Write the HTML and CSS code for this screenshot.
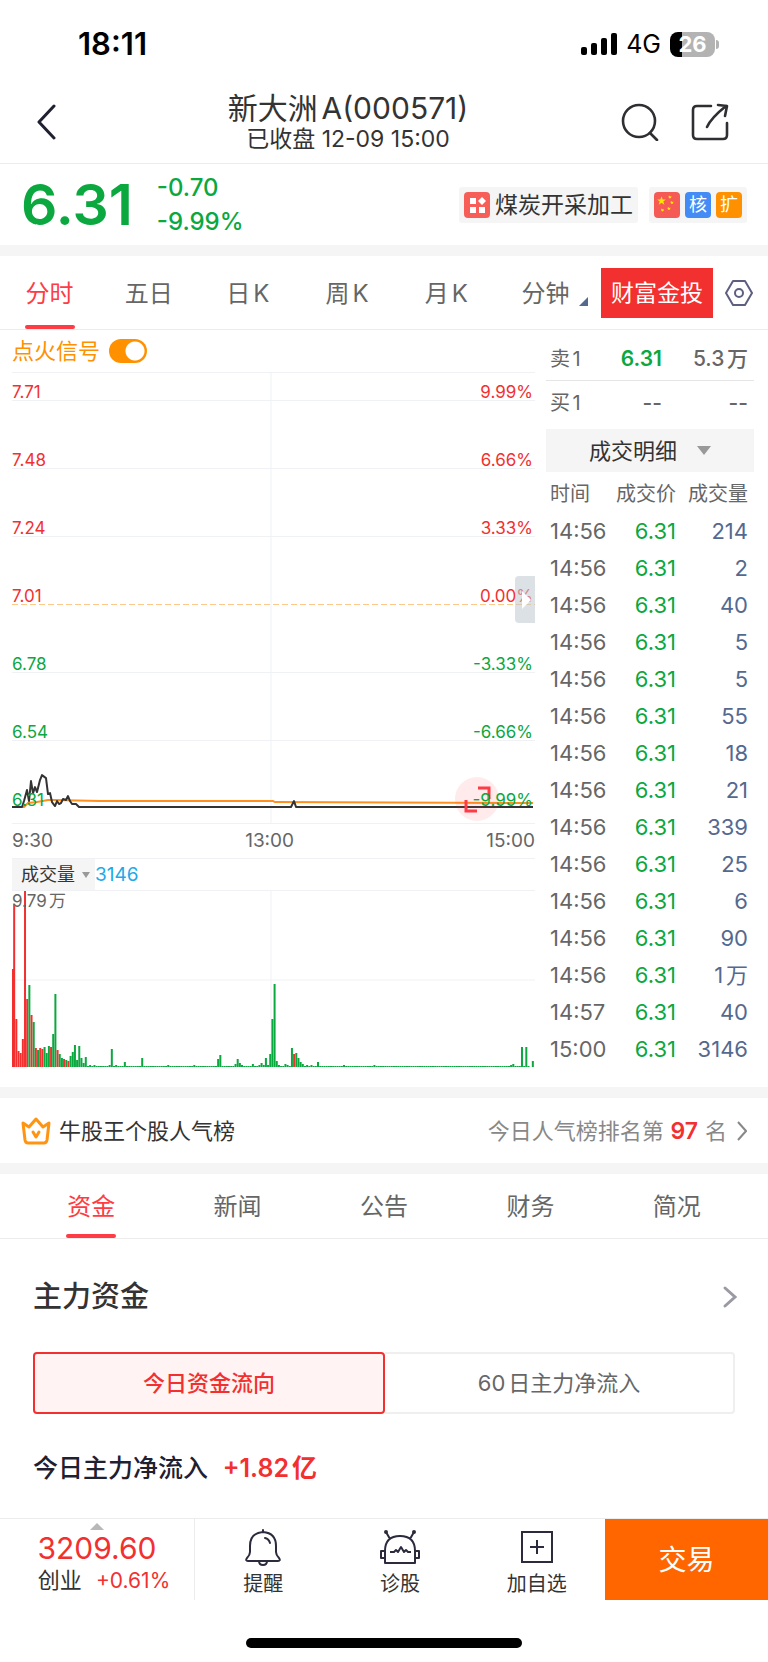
FILE: index.html
```html
<!DOCTYPE html>
<html lang="zh-CN">
<head>
  <meta charset="UTF-8">
  <meta name="viewport" content="width=device-width, initial-scale=1">
  <title>新大洲A(000571)</title>
  <link rel="stylesheet" href="styles.css">
</head>
<body>

  <div class="status-bar">
    <span class="clock">18:11</span>
    <div class="status-icons">
      <svg width="36" height="22" viewBox="0 0 36 22">
        <rect x="0" y="14" width="6" height="8" rx="2"/>
        <rect x="10" y="10" width="6" height="12" rx="2"/>
        <rect x="20" y="5" width="6" height="17" rx="2"/>
        <rect x="30" y="0" width="6" height="22" rx="2"/>
      </svg>
      <span class="network">4G</span>
      <span class="battery">26</span>
    </div>
  </div>

  <header class="header">
    <button class="icon-button back" aria-label="返回">
      <svg width="20" height="36" viewBox="0 0 20 36" fill="none" stroke="#1f2030" stroke-width="3" stroke-linecap="round" stroke-linejoin="round"><path d="M18 2L3 18l15 16"/></svg>
    </button>
    <div class="title">
      <h1>新大洲A(000571)</h1>
      <p>已收盘 12-09 15:00</p>
    </div>
    <div class="header-actions">
      <button class="icon-button" aria-label="搜索">
        <svg width="38" height="38" viewBox="0 0 38 38" fill="none" stroke="#2f2f33" stroke-width="2.6" stroke-linecap="round"><circle cx="18" cy="18" r="16"/><path d="M29 30l7 7"/></svg>
      </button>
      <button class="icon-button" aria-label="分享">
        <svg width="38" height="38" viewBox="0 0 38 38" fill="none" stroke="#2f2f33" stroke-width="2.6" stroke-linecap="round" stroke-linejoin="round"><path d="M20 3H6Q2 3 2 7v25q0 4 4 4h26q4 0 4-4V20"/><path d="M16 24Q20 15 35 3M27 2l9 1-2 10"/></svg>
      </button>
    </div>
  </header>

  <section class="quote">
    <strong class="price">6.31</strong>
    <div class="change">
      <span>-0.70</span>
      <span>-9.99%</span>
    </div>
    <a class="tag" href="#">
      <svg class="tag-icon" viewBox="0 0 26 26"><rect width="26" height="26" rx="4" fill="#f65e57"/><g fill="#fff"><rect x="6" y="6" width="6" height="6"/><rect x="6" y="15" width="6" height="6"/><rect x="15" y="15" width="6" height="6"/><path d="M18 5l4 4-4 4-4-4z"/></g></svg>
      煤炭开采加工
    </a>
    <a class="tag tag-marks" href="#" aria-label="概念">
      <svg class="tag-icon" viewBox="0 0 26 26"><rect width="26" height="26" rx="4" fill="#f65a55"/><g fill="#ffe600"><path d="M7.500 4.500l1.200 3h3.100l-2.500 2 1 3.200-2.800-1.900-2.800 1.900 1-3.200-2.500-2h3.100z"/><path d="M15 3.500l1.500 1 1-.5-.5 2-1.500.5-1-1.500zM17 9l1.500 1 1-.5-.5 2-1.500.5-1-1.500zM14 15l1.500 1 1-.5-.5 2-1.500.5-1-1.500zM7.500 16.500l1.500 1 1-.5-.5 2-1.500.5-1-1.500z"/></g></svg>
      <span class="mark blue">核</span>
      <span class="mark orange">扩</span>
    </a>
  </section>

  <nav class="periods">
    <div class="period-tabs">
      <button class="period active">分时</button>
      <button class="period">五日</button>
      <button class="period">日K</button>
      <button class="period">周K</button>
      <button class="period">月K</button>
      <button class="period more">分钟</button>
    </div>
    <a class="promo" href="#">财富金投</a>
    <button class="icon-button" aria-label="设置">
      <svg width="28" height="28" viewBox="0 0 28 28" fill="none" stroke="#5c5f80" stroke-width="2" stroke-linejoin="round"><path d="M8 2h12l7 12-7 12H8L1 14z"/><circle cx="14" cy="14" r="4"/></svg>
    </button>
  </nav>

  <main class="market">
    <div class="charts">
      <label class="signal">
        点火信号
        <input type="checkbox" class="switch" checked>
      </label>

      <div class="plot">
        <svg class="lines" viewBox="0 0 523 451" preserveAspectRatio="none" fill="none">
          <path d="M259 0V451" stroke="#f0f1f4"/>
          <path d="M0 232H523" stroke="#ffc88a" stroke-width="1" stroke-dasharray="6 3"/>
          <polyline stroke="#ff8f1f" stroke-width="2" points="0,435 12,435 16,431 25,430 36,428 43,428 88,429 261,429 263,430 521,431"/>
          <polyline stroke="#333" stroke-width="2" stroke-linejoin="round" points="0,435 10,435 12,429 15,418 17,429 19,409 21,421 23,415 25,420 28,408 30,403 34,406 36,422 38,421 40,430 43,434 45,429 47,432 49,431 51,427 54,428 56,424 58,429 60,432 64,432 67,435 279,435 282,429 284,435 521,435"/>
        </svg>
        <button class="expand" aria-label="全屏">
          <svg width="44" height="44" viewBox="0 0 44 44" fill="none" stroke="#ff3b45" stroke-width="3"><path d="M23 11h11v11M11 23v11h11"/></svg>
        </button>
        <div class="level up"><span>7.71</span><span>9.99%</span></div>
        <div class="level up"><span>7.48</span><span>6.66%</span></div>
        <div class="level up"><span>7.24</span><span>3.33%</span></div>
        <div class="level up middle"><span>7.01</span><span>0.00%</span></div>
        <div class="level down"><span>6.78</span><span>-3.33%</span></div>
        <div class="level down"><span>6.54</span><span>-6.66%</span></div>
        <div class="level down last"><span>6.31</span><span>-9.99%</span></div>
        <button class="handle" aria-label="收起"></button>
      </div>

      <div class="times"><span>9:30</span><span>13:00</span><span>15:00</span></div>

      <div class="volume-head">
        <div class="picker small">
          <select aria-label="指标"><option>成交量</option></select>
        </div>
        <span>3146</span>
      </div>
      <div class="volume-plot">
        <svg id="volume" class="lines" viewBox="0 0 523 176" preserveAspectRatio="none">
          <path d="M259 0V176M0 89H523" stroke="#f0f1f4"/>
        </svg>
        <span class="volume-max">9.79万</span>
      </div>
    </div>

    <aside class="orders">
      <table class="book">
        <tr><th scope="row">卖1</th><td class="green">6.31</td><td>5.3万</td></tr>
        <tr><th scope="row">买1</th><td>--</td><td>--</td></tr>
      </table>
      <div class="picker large">
        <select aria-label="明细类型"><option>成交明细</option></select>
      </div>
      <table class="trades">
        <thead>
          <tr><th>时间</th><th>成交价</th><th>成交量</th></tr>
        </thead>
        <tbody>
          <tr><td>14:56</td><td>6.31</td><td>214</td></tr>
          <tr><td>14:56</td><td>6.31</td><td>2</td></tr>
          <tr><td>14:56</td><td>6.31</td><td>40</td></tr>
          <tr><td>14:56</td><td>6.31</td><td>5</td></tr>
          <tr><td>14:56</td><td>6.31</td><td>5</td></tr>
          <tr><td>14:56</td><td>6.31</td><td>55</td></tr>
          <tr><td>14:56</td><td>6.31</td><td>18</td></tr>
          <tr><td>14:56</td><td>6.31</td><td>21</td></tr>
          <tr><td>14:56</td><td>6.31</td><td>339</td></tr>
          <tr><td>14:56</td><td>6.31</td><td>25</td></tr>
          <tr><td>14:56</td><td>6.31</td><td>6</td></tr>
          <tr><td>14:56</td><td>6.31</td><td>90</td></tr>
          <tr><td>14:56</td><td>6.31</td><td>1万</td></tr>
          <tr><td>14:57</td><td>6.31</td><td>40</td></tr>
          <tr><td>15:00</td><td>6.31</td><td>3146</td></tr>
        </tbody>
      </table>
    </aside>
  </main>

  <a class="ranking" href="#">
    <svg width="30" height="28" viewBox="0 0 30 28" fill="none" stroke="#ff9412" stroke-width="3" stroke-linejoin="round" stroke-linecap="round"><path d="M2 6l6 4 7-8 7 8 6-4-2 17q-.5 3-3 3H7q-2.500 0-3-3z"/><path d="M12 15l3 5 3-5"/></svg>
    <span class="ranking-name">牛股王个股人气榜</span>
    <span class="ranking-place">今日人气榜排名第<b>97</b>名</span>
    <svg width="10" height="20" viewBox="0 0 10 20" fill="none" stroke="#888" stroke-width="2"><path d="M1 1l8 9-8 9"/></svg>
  </a>

  <nav class="sections">
    <button class="section active">资金</button>
    <button class="section">新闻</button>
    <button class="section">公告</button>
    <button class="section">财务</button>
    <button class="section">简况</button>
  </nav>

  <section class="funds">
    <a class="funds-head" href="#">
      <h2>主力资金</h2>
      <svg width="12" height="22" viewBox="0 0 12 22" fill="none" stroke="#9a9aa5" stroke-width="3" stroke-linecap="round" overflow="visible"><path d="M2 2l10 9-10 9"/></svg>
    </a>
    <div class="switcher">
      <button class="active">今日资金流向</button>
      <button>60日主力净流入</button>
    </div>
    <p class="inflow">今日主力净流入 <b>+1.82亿</b></p>
  </section>

  <footer class="bottom-bar">
    <a class="index" href="#">
      <span class="index-value">3209.60</span>
      <span class="index-row">创业 <span>+0.61%</span></span>
    </a>
    <button class="action">
      <svg width="42" height="38" viewBox="0 0 42 38" fill="none" stroke="#2b2b3d" stroke-width="2" stroke-linejoin="round" stroke-linecap="round"><path d="M21 2v2M21 4Q8 5 8 18v6q0 3-3 6-2 3 1 3h30q3 0 1-3-3-3-3-6v-6Q34 5 21 4zM17 33q0 4 4 4t4-4M23 10q4 1 5 5"/></svg>
      提醒
    </button>
    <button class="action">
      <svg width="42" height="38" viewBox="0 0 42 38" fill="none" stroke="#2b2b3d" stroke-width="2" stroke-linejoin="round"><path d="M6 35V23Q6 8 21 8t15 15v12zM6 23H2v7h4M36 23h4v7h-4M11 11L7 4M31 11l4-7"/><circle cx="7" cy="4" r="1" fill="#2b2b3d"/><circle cx="35" cy="4" r="1" fill="#2b2b3d"/><path d="M11 24h4l2-2 2 2 3-5 3 5 2-2 2 2h3"/></svg>
      诊股
    </button>
    <button class="action">
      <svg width="42" height="38" viewBox="0 0 42 38" fill="none" stroke="#2b2b3d" stroke-width="2"><rect x="6" y="4" width="30" height="30"/><path d="M21 12v14M14 19h14"/></svg>
      加自选
    </button>
    <button class="trade">交易</button>
  </footer>
  <div class="home-indicator"></div>

  <script>
    const MINUTES = 241;
    const BASE = 176;
    // minute: height of the bar
    const volumes = {
      0: 98, 1: 163, 2: 48, 3: 16, 4: 14, 5: 28, 6: 176, 7: 68, 8: 82, 9: 52, 10: 45,
      11: 19, 12: 17, 13: 19, 14: 18, 15: 20, 16: 14, 17: 21, 18: 20, 19: 33, 20: 73,
      21: 17, 22: 13, 23: 9, 24: 8, 25: 7, 26: 6, 27: 11, 28: 15, 29: 22, 30: 7, 31: 21,
      32: 9, 33: 4, 34: 10, 36: 2, 38: 2, 45: 2, 46: 18, 48: 2, 52: 5, 60: 9, 72: 2, 84: 2,
      95: 8, 96: 12, 103: 3, 104: 8, 105: 4, 106: 2, 111: 3, 114: 2, 115: 4, 116: 2,
      117: 9, 118: 2, 119: 13, 120: 48, 121: 83, 122: 6, 123: 2, 126: 3, 127: 2, 129: 19,
      130: 13, 131: 14, 132: 9, 133: 5, 134: 3, 136: 2, 138: 2, 141: 5, 153: 2, 167: 2,
      230: 2, 231: 3, 235: 20, 237: 20, 240: 6
    };
    const rising = [0, 1, 2, 3, 4, 5, 6, 7, 9, 11, 13, 14, 18, 21, 24, 26, 130];

    const svg = document.getElementById('volume');
    for (let i = 0; i < MINUTES; i++) {
      if (i === 239) continue;
      const height = volumes[i] || 1;
      const bar = document.createElementNS('http://www.w3.org/2000/svg', 'rect');
      bar.setAttribute('x', Math.max(0, i * 523 / MINUTES - 1));
      bar.setAttribute('y', BASE - height);
      bar.setAttribute('width', 2);
      bar.setAttribute('height', height);
      bar.setAttribute('fill', rising.includes(i) ? '#f23030' : '#0aa83f');
      svg.appendChild(bar);
    }
  </script>
</body>
</html>
```
FILE: styles.css
```css
* {
  box-sizing: border-box;
}

body {
  margin: 0;
  background: #fff;
  color: #333;
  font-family: Inter, "Noto Sans CJK SC", sans-serif;
  font-size: 22px;
  line-height: 32px;
  text-autospace: normal;
}

h1, h2, p {
  margin: 0;
}

a {
  color: inherit;
  text-decoration: none;
}

button, select {
  padding: 0;
  border: none;
  background: none;
  color: inherit;
  font: inherit;
  cursor: pointer;
}

svg {
  display: block;
}

table {
  width: 100%;
  border-collapse: collapse;
}

th, td {
  padding: 0;
  font-weight: 400;
}

.icon-button {
  display: flex;
}

.green {
  color: #0aa83f;
}

/* status bar */
.status-bar {
  display: flex;
  justify-content: space-between;
  align-items: center;
  height: 88px;
  padding: 0 53px 0 78px;
  color: #000;
}

.clock {
  font-size: 31px;
  font-weight: 600;
}

.status-icons {
  display: flex;
  align-items: center;
  gap: 9px;
}

.network {
  font-size: 25px;
}

.battery {
  position: relative;
  width: 45px;
  height: 25px;
  border-radius: 8px;
  background: linear-gradient(to right, #000 12px, #b3b3b3 12px);
  color: #fff;
  font-size: 22px;
  font-weight: 700;
  line-height: 25px;
  text-align: center;
}

.battery::after {
  content: "";
  position: absolute;
  top: 8px;
  right: -4px;
  width: 3px;
  height: 9px;
  border-radius: 0 3px 3px 0;
  background: #b3b3b3;
}

/* header */
.header {
  display: flex;
  align-items: center;
  height: 76px;
  padding-bottom: 8px;
  border-bottom: 1px solid #ececec;
}

.back {
  width: 87px;
  padding-left: 36px;
}

.title {
  flex: 1;
  text-align: center;
}

.title h1 {
  font-size: 30px;
  font-weight: 400;
  line-height: 34px;
}

.title p {
  font-size: 23px;
  line-height: 28px;
}

.header-actions {
  display: flex;
  gap: 32px;
  width: 159px;
  padding-left: 12px;
}

/* quote */
.quote {
  display: flex;
  align-items: center;
  height: 92px;
  padding: 0 21px;
  border-bottom: 11px solid #f5f5f5;
}

.price {
  color: #0aa83f;
  font-size: 57px;
  font-weight: 600;
  line-height: 64px;
}

.change {
  display: flex;
  flex: 1;
  flex-direction: column;
  padding-left: 24px;
  color: #0aa83f;
  font-size: 24px;
  font-weight: 500;
  line-height: 34px;
}

.tag {
  display: flex;
  align-items: center;
  gap: 5px;
  height: 36px;
  padding: 0 5px;
  border-radius: 3px;
  background: #f5f5f5;
  font-size: 23px;
}

.tag-marks {
  margin-left: 11px;
}

.tag-icon {
  width: 26px;
  height: 26px;
}

.mark {
  width: 26px;
  border-radius: 4px;
  color: #fff;
  font-size: 18px;
  line-height: 26px;
  text-align: center;
}

.blue {
  background: #448cf5;
}

.orange {
  background: #ff9100;
}

/* chart periods */
.periods {
  display: flex;
  align-items: center;
  height: 74px;
  padding-right: 15px;
  border-bottom: 1px solid #ececec;
}

.period-tabs {
  display: flex;
  flex: 1;
  align-self: stretch;
}

.period {
  position: relative;
  flex: 1;
  padding-top: 2px;
  color: #666;
  font-size: 24px;
}

.period.active,
.section.active {
  color: #ff3b45;
}

.period.active::after,
.section.active::after {
  content: "";
  position: absolute;
  bottom: 0;
  left: 50%;
  width: 50px;
  height: 4px;
  margin-left: -25px;
  border-radius: 2px;
  background: #ff3b45;
}

.more::after {
  content: "";
  position: absolute;
  right: 7px;
  bottom: 23px;
  border-bottom: 9px solid #54698f;
  border-left: 9px solid transparent;
}

.promo {
  margin: 0 12px 0 6px;
  padding: 9px 10px;
  background: #f23030;
  color: #fff;
  font-size: 23px;
}

/* charts and order book */
.market {
  display: flex;
  gap: 11px;
  padding: 0 14px 20px 12px;
  border-bottom: 11px solid #f5f5f5;
}

.charts {
  flex: 1;
}

.signal {
  display: flex;
  align-items: center;
  gap: 9px;
  height: 42px;
  color: #ff9100;
}

.switch {
  width: 38px;
  height: 24px;
  margin: 0;
  border-radius: 12px;
  background: radial-gradient(circle at 26px 12px, #fff 9px, #ff9100 10px);
  appearance: none;
}

.plot {
  position: relative;
  height: 452px;
  border-top: 1px solid #f0f1f4;
  border-bottom: 1px solid #f0f1f4;
}

.lines {
  position: absolute;
  top: 0;
  left: 0;
  width: 100%;
  height: 100%;
}

.level {
  position: relative;
  display: flex;
  justify-content: space-between;
  align-items: flex-end;
  height: 68px;
  padding-right: 2px;
  border-bottom: 1px solid #f0f1f4;
  font-size: 17px;
  line-height: 16px;
}

.level:first-of-type {
  height: 28px;
}

.level.middle,
.level.last {
  border-color: transparent;
}

.up {
  color: #f23030;
}

.down {
  color: #0aa83f;
}

.expand {
  position: absolute;
  top: 404px;
  right: 36px;
  border-radius: 50%;
  background: rgba(255, 59, 69, 0.1);
}

.handle {
  position: absolute;
  top: 203px;
  right: 0;
  width: 20px;
  height: 47px;
  border-radius: 4px 0 0 4px;
  background: rgba(190, 200, 208, 0.55);
}

.handle::after {
  content: "";
  display: block;
  margin-left: 7px;
  border: 9px solid transparent;
  border-right: none;
  border-left-color: #fff;
}

.times {
  display: flex;
  justify-content: space-between;
  height: 34px;
  color: #666;
  font-size: 19px;
  line-height: 34px;
}

.volume-head {
  display: flex;
  height: 33px;
  border-top: 1px solid #f0f1f4;
  border-bottom: 1px solid #f0f1f4;
  color: #1ea9e8;
  font-size: 19px;
}

.volume-plot {
  position: relative;
  height: 176px;
}

.volume-max {
  position: relative;
  display: block;
  color: #666;
  font-size: 17px;
  line-height: 20px;
}

.orders {
  width: 208px;
  color: #666;
}

.book {
  margin-top: 7px;
}

.book tr:first-child {
  border-bottom: 1px solid #e5e5e5;
}

.book th {
  width: 48px;
  padding-left: 4px;
  font-size: 20px;
  text-align: left;
}

.book td {
  padding-right: 6px;
  font-size: 21px;
  font-weight: 500;
  line-height: 43px;
  text-align: right;
}

.book td:nth-child(2) {
  width: 68px;
  padding-right: 0;
}

.book .green {
  font-weight: 600;
}

/* drop-downs */
.picker {
  position: relative;
  background: #f5f5f5;
  color: #333;
}

.picker select {
  width: 100%;
  height: 100%;
  appearance: none;
}

.picker::after {
  content: "";
  position: absolute;
  border: 5px solid transparent;
  border-top: 6px solid #999;
  border-bottom: none;
  pointer-events: none;
}

.picker.small {
  width: 83px;
  font-size: 18px;
}

.picker.small select {
  padding-left: 9px;
}

.picker.small::after {
  top: 13px;
  right: 5px;
  border-width: 6px 4px 0;
}

.picker.large {
  height: 43px;
  margin-top: 5px;
}

.picker.large select {
  padding-left: 43px;
}

.picker.large::after {
  top: 17px;
  right: 43px;
  border-width: 9px 7px 0;
}

.trades {
  table-layout: fixed;
}

.trades th {
  height: 40px;
  padding-top: 4px;
  font-size: 20px;
  text-align: right;
}

.trades th:first-child {
  width: 62px;
}

.trades th:nth-child(2) {
  width: 68px;
}

.trades td {
  height: 37px;
  font-size: 22px;
  text-align: right;
}

.trades th:first-child,
.trades td:first-child {
  padding-left: 4px;
  text-align: left;
}

.trades td:nth-child(2) {
  color: #0aa83f;
}

.trades th:last-child,
.trades td:last-child {
  padding-right: 6px;
}

.trades td:last-child {
  color: #54698f;
}

/* popularity ranking */
.ranking {
  display: flex;
  align-items: center;
  height: 76px;
  padding: 0 21px;
  border-bottom: 11px solid #f5f5f5;
}

.ranking-name {
  flex: 1;
  padding-left: 8px;
}

.ranking-place {
  padding-right: 10px;
  color: #888;
}

.ranking b {
  margin: 0 4px;
  color: #f23030;
  font-size: 23px;
  font-weight: 600;
}

/* section tabs */
.sections {
  display: flex;
  height: 65px;
  padding: 0 18px;
  border-bottom: 1px solid #ececec;
}

.section {
  position: relative;
  flex: 1;
  padding-top: 2px;
  color: #666;
  font-size: 24px;
}

/* funds */
.funds {
  padding: 38px 33px 32px;
}

.funds-head {
  display: flex;
  justify-content: space-between;
  align-items: center;
}

.funds h2 {
  font-size: 29px;
  font-weight: 500;
  line-height: 40px;
}

.switcher {
  display: flex;
  margin: 35px 0 36px;
}

.switcher button {
  flex: 1;
  height: 62px;
  border: 2px solid #efefef;
  border-left: none;
  border-radius: 0 4px 4px 0;
  color: #666;
}

.switcher .active {
  border: 2px solid #f23030;
  border-radius: 4px;
  background: #fff3f3;
  color: #f23030;
  font-weight: 500;
}

.inflow {
  color: #1f2030;
  font-size: 25px;
  font-weight: 500;
  line-height: 36px;
}

.inflow b {
  margin-left: 8px;
  color: #f23030;
  font-weight: 600;
}

/* bottom bar */
.bottom-bar {
  display: flex;
  height: 82px;
  border-top: 1px solid #ececec;
}

.index {
  position: relative;
  display: flex;
  flex-direction: column;
  align-items: center;
  width: 195px;
  padding-top: 13px;
  border-right: 1px solid #ececec;
}

.index::before {
  content: "";
  position: absolute;
  top: 4px;
  border: 7px solid transparent;
  border-top: none;
  border-bottom-color: #b8b8b8;
}

.index-value {
  color: #f23030;
  font-size: 30px;
}

.index-row {
  padding-left: 14px;
}

.index-row span {
  margin-left: 8px;
  color: #f23030;
  font-size: 21px;
}

.action {
  display: flex;
  flex: 1;
  flex-direction: column;
  align-items: center;
  padding-top: 9px;
  font-size: 20px;
}

.action svg {
  margin-bottom: 2px;
}

.trade {
  width: 163px;
  background: #ff6600;
  color: #fff;
  font-size: 28px;
}

.home-indicator {
  width: 36%;
  height: 10px;
  margin: 38px auto 15px;
  border-radius: 5px;
  background: #000;
}
```
